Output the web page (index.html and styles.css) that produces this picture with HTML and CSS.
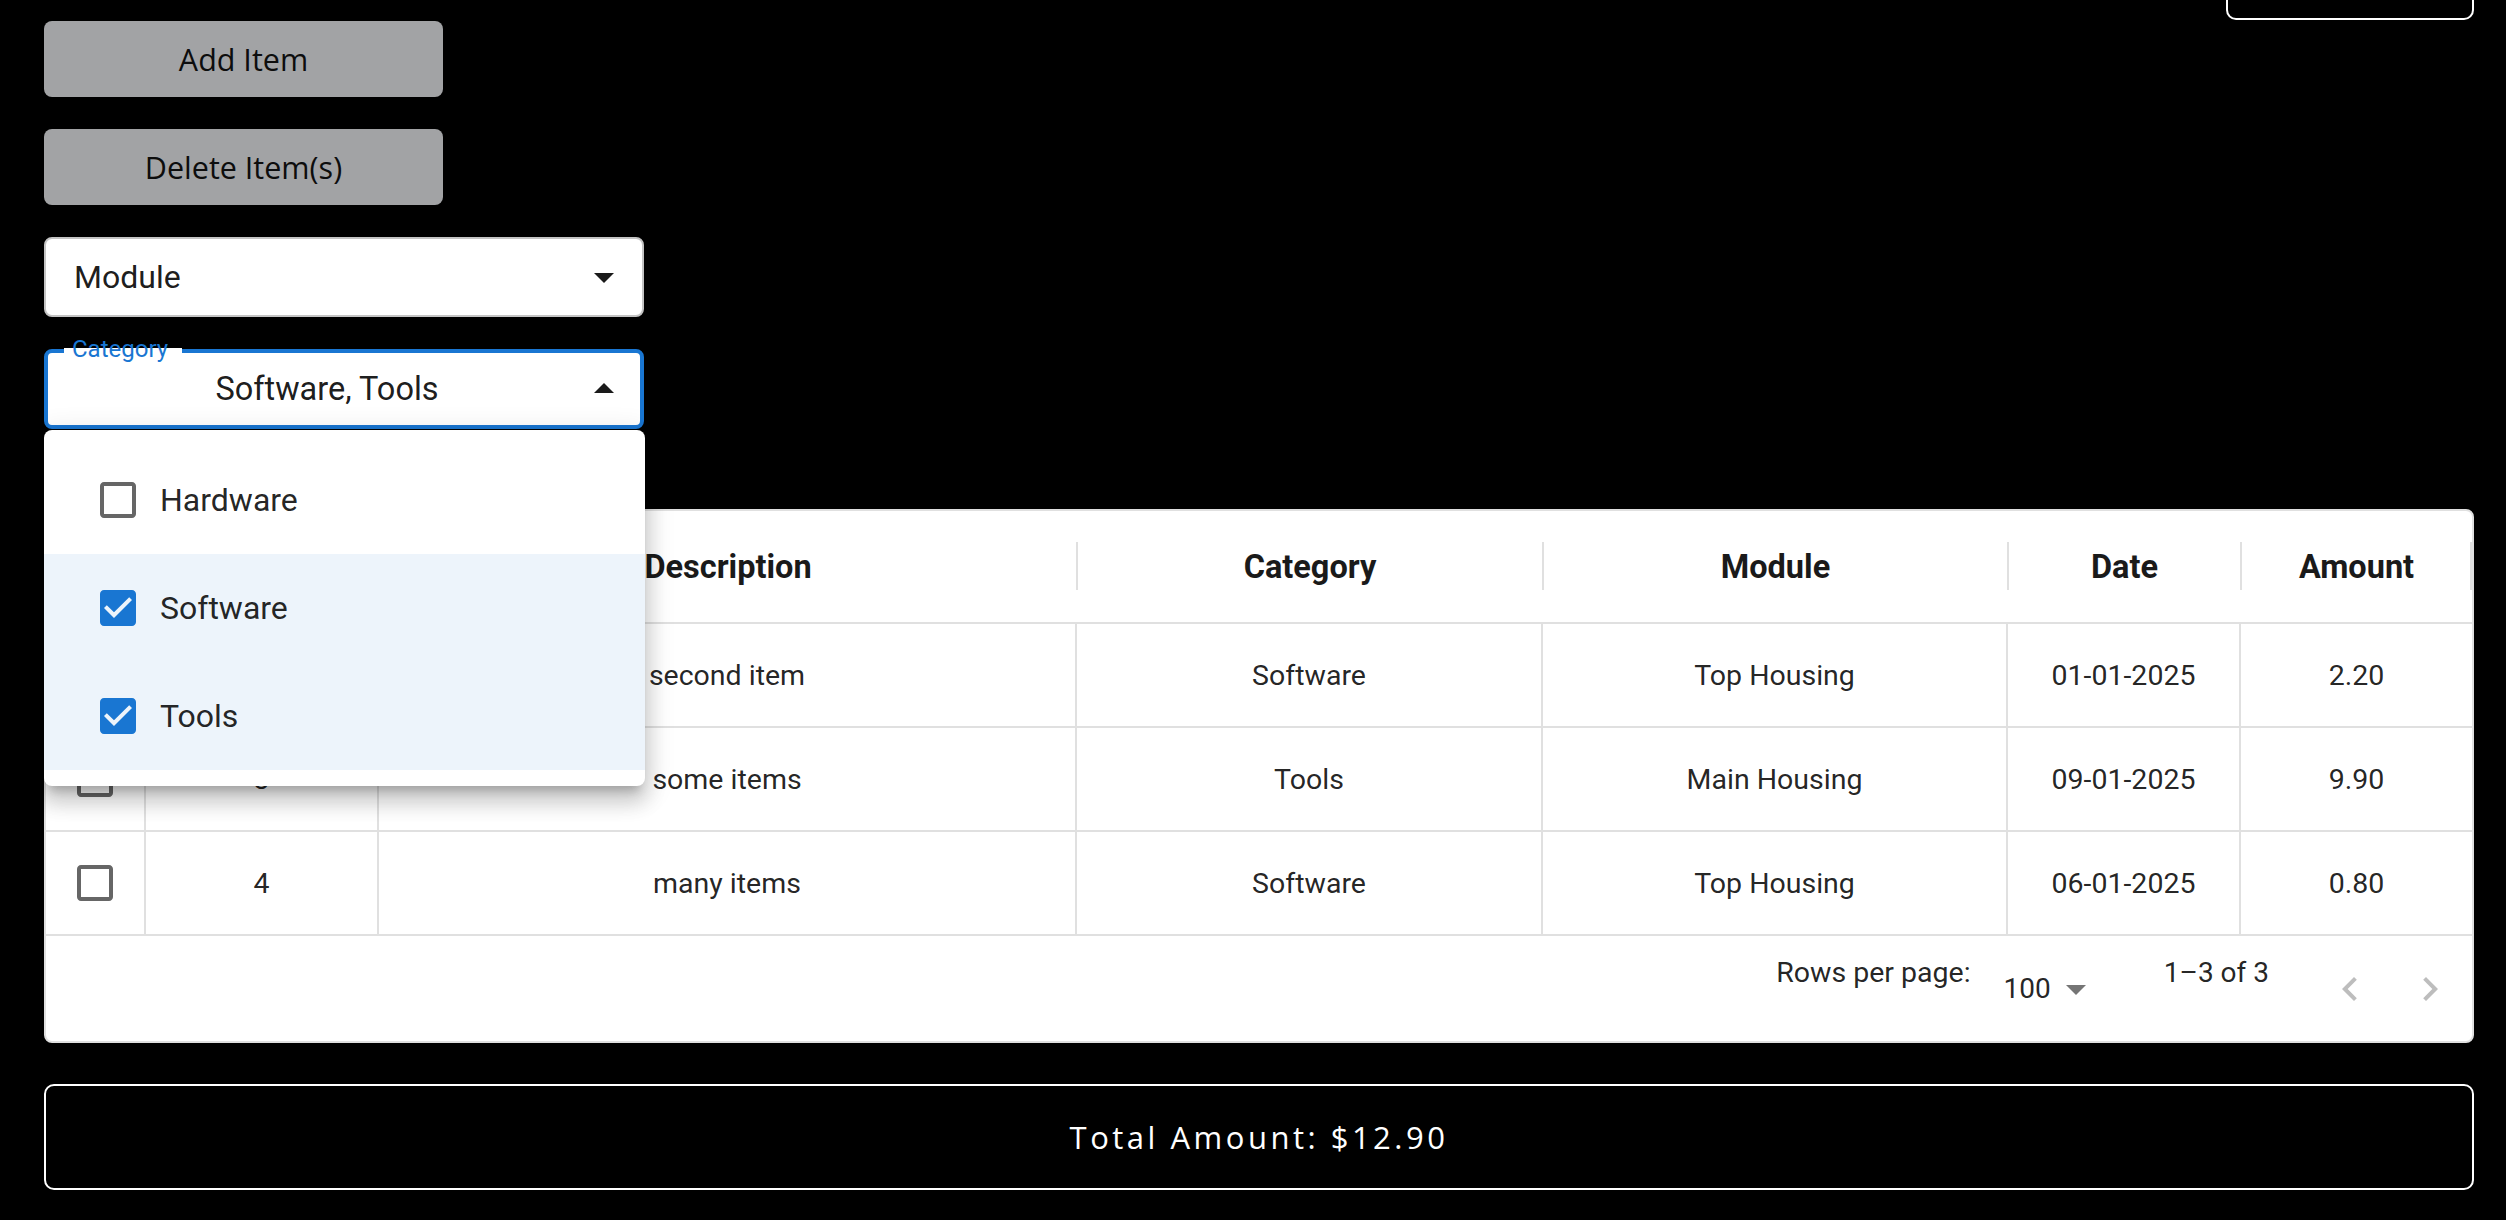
FILE: index.html
```html
<!DOCTYPE html>
<html lang="en">
<head>
<meta charset="utf-8">
<title>Items</title>
<link rel="stylesheet" href="styles.css">
</head>
<body>
<div class="page">
  <div class="topbar"><div class="top-box"></div></div>

  <div class="controls">
    <button class="btn">Add Item</button>
    <button class="btn">Delete Item(s)</button>

    <div class="select">
      <span class="value">Module</span>
      <svg class="caret" viewBox="0 0 24 24" width="48" height="48"><path d="M7 10l5 5 5-5z"/></svg>
    </div>

    <div class="select focused">
      <span class="float-label">Category</span>
      <span class="value center">Software, Tools</span>
      <svg class="caret" viewBox="0 0 24 24" width="48" height="48"><path d="M7 14l5-5 5 5z"/></svg>

      <div class="menu">
        <div class="item">
          <span class="cb"><svg viewBox="0 0 24 24" width="48" height="48" class="cb-off"><path d="M19 5v14H5V5h14m0-2H5c-1.1 0-2 .9-2 2v14c0 1.1.9 2 2 2h14c1.1 0 2-.9 2-2V5c0-1.1-.9-2-2-2z"/></svg></span>
          <span>Hardware</span>
        </div>
        <div class="item sel">
          <span class="cb"><svg viewBox="0 0 24 24" width="48" height="48" class="cb-on"><path d="M19 3H5c-1.11 0-2 .9-2 2v14c0 1.1.89 2 2 2h14c1.11 0 2-.9 2-2V5c0-1.1-.89-2-2-2zm-9 14l-5-5 1.41-1.41L10 14.17l7.59-7.59L19 8l-9 9z"/></svg></span>
          <span>Software</span>
        </div>
        <div class="item sel">
          <span class="cb"><svg viewBox="0 0 24 24" width="48" height="48" class="cb-on"><path d="M19 3H5c-1.11 0-2 .9-2 2v14c0 1.1.89 2 2 2h14c1.11 0 2-.9 2-2V5c0-1.1-.89-2-2-2zm-9 14l-5-5 1.41-1.41L10 14.17l7.59-7.59L19 8l-9 9z"/></svg></span>
          <span>Tools</span>
        </div>
      </div>
    </div>
  </div>

  <div class="grid">
    <div class="row head">
      <div class="cell"><svg viewBox="0 0 24 24" width="48" height="48" class="cb-off"><path d="M19 5v14H5V5h14m0-2H5c-1.1 0-2 .9-2 2v14c0 1.1.9 2 2 2h14c1.1 0 2-.9 2-2V5c0-1.1-.9-2-2-2z"/></svg></div>
      <div class="cell">ID</div>
      <div class="cell">Description</div>
      <div class="cell">Category</div>
      <div class="cell">Module</div>
      <div class="cell">Date</div>
      <div class="cell">Amount</div>
    </div>
    <div class="row body-row">
      <div class="cell"><svg viewBox="0 0 24 24" width="48" height="48" class="cb-off"><path d="M19 5v14H5V5h14m0-2H5c-1.1 0-2 .9-2 2v14c0 1.1.9 2 2 2h14c1.1 0 2-.9 2-2V5c0-1.1-.9-2-2-2z"/></svg></div>
      <div class="cell">2</div>
      <div class="cell">second item</div>
      <div class="cell">Software</div>
      <div class="cell">Top Housing</div>
      <div class="cell">01-01-2025</div>
      <div class="cell">2.20</div>
    </div>
    <div class="row body-row">
      <div class="cell"><svg viewBox="0 0 24 24" width="48" height="48" class="cb-off"><path d="M19 5v14H5V5h14m0-2H5c-1.1 0-2 .9-2 2v14c0 1.1.9 2 2 2h14c1.1 0 2-.9 2-2V5c0-1.1-.9-2-2-2z"/></svg></div>
      <div class="cell">3</div>
      <div class="cell">some items</div>
      <div class="cell">Tools</div>
      <div class="cell">Main Housing</div>
      <div class="cell">09-01-2025</div>
      <div class="cell">9.90</div>
    </div>
    <div class="row body-row">
      <div class="cell"><svg viewBox="0 0 24 24" width="48" height="48" class="cb-off"><path d="M19 5v14H5V5h14m0-2H5c-1.1 0-2 .9-2 2v14c0 1.1.9 2 2 2h14c1.1 0 2-.9 2-2V5c0-1.1-.9-2-2-2z"/></svg></div>
      <div class="cell">4</div>
      <div class="cell">many items</div>
      <div class="cell">Software</div>
      <div class="cell">Top Housing</div>
      <div class="cell">06-01-2025</div>
      <div class="cell">0.80</div>
    </div>
    <div class="footer">
      <span class="rows-label">Rows per page:</span>
      <span class="rows-select">100<svg viewBox="0 0 24 24" width="48" height="48"><path d="M7 10l5 5 5-5z"/></svg></span>
      <span class="displayed">1–3 of 3</span>
      <span class="actions">
        <span class="nav"><svg viewBox="0 0 24 24" width="48" height="48"><path d="M15.41 16.59 10.83 12l4.58-4.59L14 6l-6 6 6 6z"/></svg></span>
        <span class="nav"><svg viewBox="0 0 24 24" width="48" height="48"><path d="M8.59 16.59 13.17 12 8.59 7.41 10 6l6 6-6 6z"/></svg></span>
      </span>
    </div>
  </div>

  <div class="total">Total Amount: $12.90</div>
</div>
</body>
</html>
```

FILE: styles.css
```css
html, body {
  margin: 0;
  background: #000;
  font-family: Roboto, "Liberation Sans", sans-serif;
}

.page {
  padding: 0 32px 30px 44px;
}

.topbar {
  display: flex;
  justify-content: flex-end;
}

.top-box {
  width: 244px;
  height: 18px;
  border: 2px solid #fff;
  border-top: none;
  border-radius: 0 0 10px 10px;
}

.controls {
  margin-top: 1px;
  display: flex;
  flex-direction: column;
  align-items: flex-start;
  gap: 32px;
}

.btn {
  width: 399px;
  height: 76px;
  border: none;
  border-radius: 8px;
  background: #a2a3a5;
  color: #0d0d0d;
  font-family: "Open Sans", "Noto Sans", sans-serif;
  font-size: 30.5px;
  padding: 0;
  display: flex;
  align-items: center;
  justify-content: center;
}

.select {
  position: relative;
  box-sizing: border-box;
  width: 600px;
  height: 80px;
  background: #fff;
  border: 2px solid #c4c4c4;
  border-radius: 8px;
  display: flex;
  align-items: center;
  padding: 0 14px 0 28px;
  font-size: 32px;
  color: rgba(0, 0, 0, 0.9);
}

.select.focused {
  border: 4px solid #1976d2;
  padding: 0 12px 0 26px;
}

.value {
  flex: 1;
}

.value.center {
  text-align: center;
  font-size: 32.5px;
}

.caret {
  fill: #1a1a1a;
  flex: none;
}

.float-label {
  position: absolute;
  left: 16px;
  top: -16px;
  height: 24px;
  line-height: 24px;
  padding: 0 14px 0 8px;
  font-size: 24px;
  color: #1976d2;
  background: linear-gradient(to bottom, #000 0 11px, #fff 11px);
}

.menu {
  position: absolute;
  left: -4px;
  top: calc(100% + 5px);
  width: 601px;
  padding: 16px 0;
  background: #fff;
  border-radius: 8px;
  box-shadow: 0 10px 10px -6px rgba(0, 0, 0, 0.2),
              0 16px 20px 2px rgba(0, 0, 0, 0.14),
              0 6px 28px 4px rgba(0, 0, 0, 0.12);
  z-index: 10;
}

.item {
  display: flex;
  align-items: center;
  height: 108px;
  padding: 0 32px;
  font-size: 32px;
  color: rgba(0, 0, 0, 0.87);
}

.item.sel {
  background: #edf4fb;
}

.cb {
  display: flex;
  padding: 18px;
}

.cb-off {
  fill: #666;
}

.cb-on {
  fill: #1976d2;
}

.grid {
  margin-top: 80px;
  background: #fff;
  border: 2px solid #e0e0e0;
  border-radius: 8px;
  overflow: hidden;
  color: rgba(0, 0, 0, 0.87);
}

.row {
  display: grid;
  grid-template-columns: 100px 233px 698px 466px 465px 233px 1fr;
}

.cell {
  box-sizing: border-box;
  display: flex;
  align-items: center;
  justify-content: center;
}

.head {
  height: 111px;
  border-bottom: 2px solid #e0e0e0;
}

.head .cell {
  position: relative;
  font-size: 32.5px;
  font-weight: 700;
  color: #1a1a1a;
}

.head .cell::after {
  content: "";
  position: absolute;
  right: -1px;
  top: 31px;
  width: 2px;
  height: 48px;
  background: #e0e0e0;
}

.head .cell:last-child::after {
  right: 0;
}

.body-row {
  height: 102px;
  border-bottom: 2px solid #e0e0e0;
}

.body-row .cell {
  font-size: 28.5px;
  border-right: 2px solid #e0e0e0;
}

.body-row .cell:last-child {
  border-right: none;
}

.footer {
  height: 105px;
  display: flex;
  align-items: center;
  justify-content: flex-end;
  padding-right: 2px;
  font-size: 28px;
  color: rgba(0, 0, 0, 0.87);
}

.rows-label,
.displayed {
  align-self: flex-start;
  margin-top: 17px;
  line-height: 40px;
}

.rows-label {
  font-size: 28.5px;
}

.rows-select {
  display: flex;
  align-items: center;
  margin-left: 33px;
  line-height: 40px;
}

.rows-select svg {
  fill: #757575;
  margin-left: 1px;
}

.displayed {
  margin-left: 64px;
}

.actions {
  display: flex;
  margin-left: 41px;
}

.nav {
  width: 80px;
  height: 80px;
  display: flex;
  align-items: center;
  justify-content: center;
}

.nav svg {
  fill: #bdbdbd;
}

.total {
  box-sizing: border-box;
  margin-top: 41px;
  height: 106px;
  border: 2px solid #fff;
  border-radius: 10px;
  display: flex;
  align-items: center;
  justify-content: center;
  color: #fff;
  font-family: "Open Sans", "Noto Sans", sans-serif;
  font-size: 31px;
  letter-spacing: 3.5px;
}
```
